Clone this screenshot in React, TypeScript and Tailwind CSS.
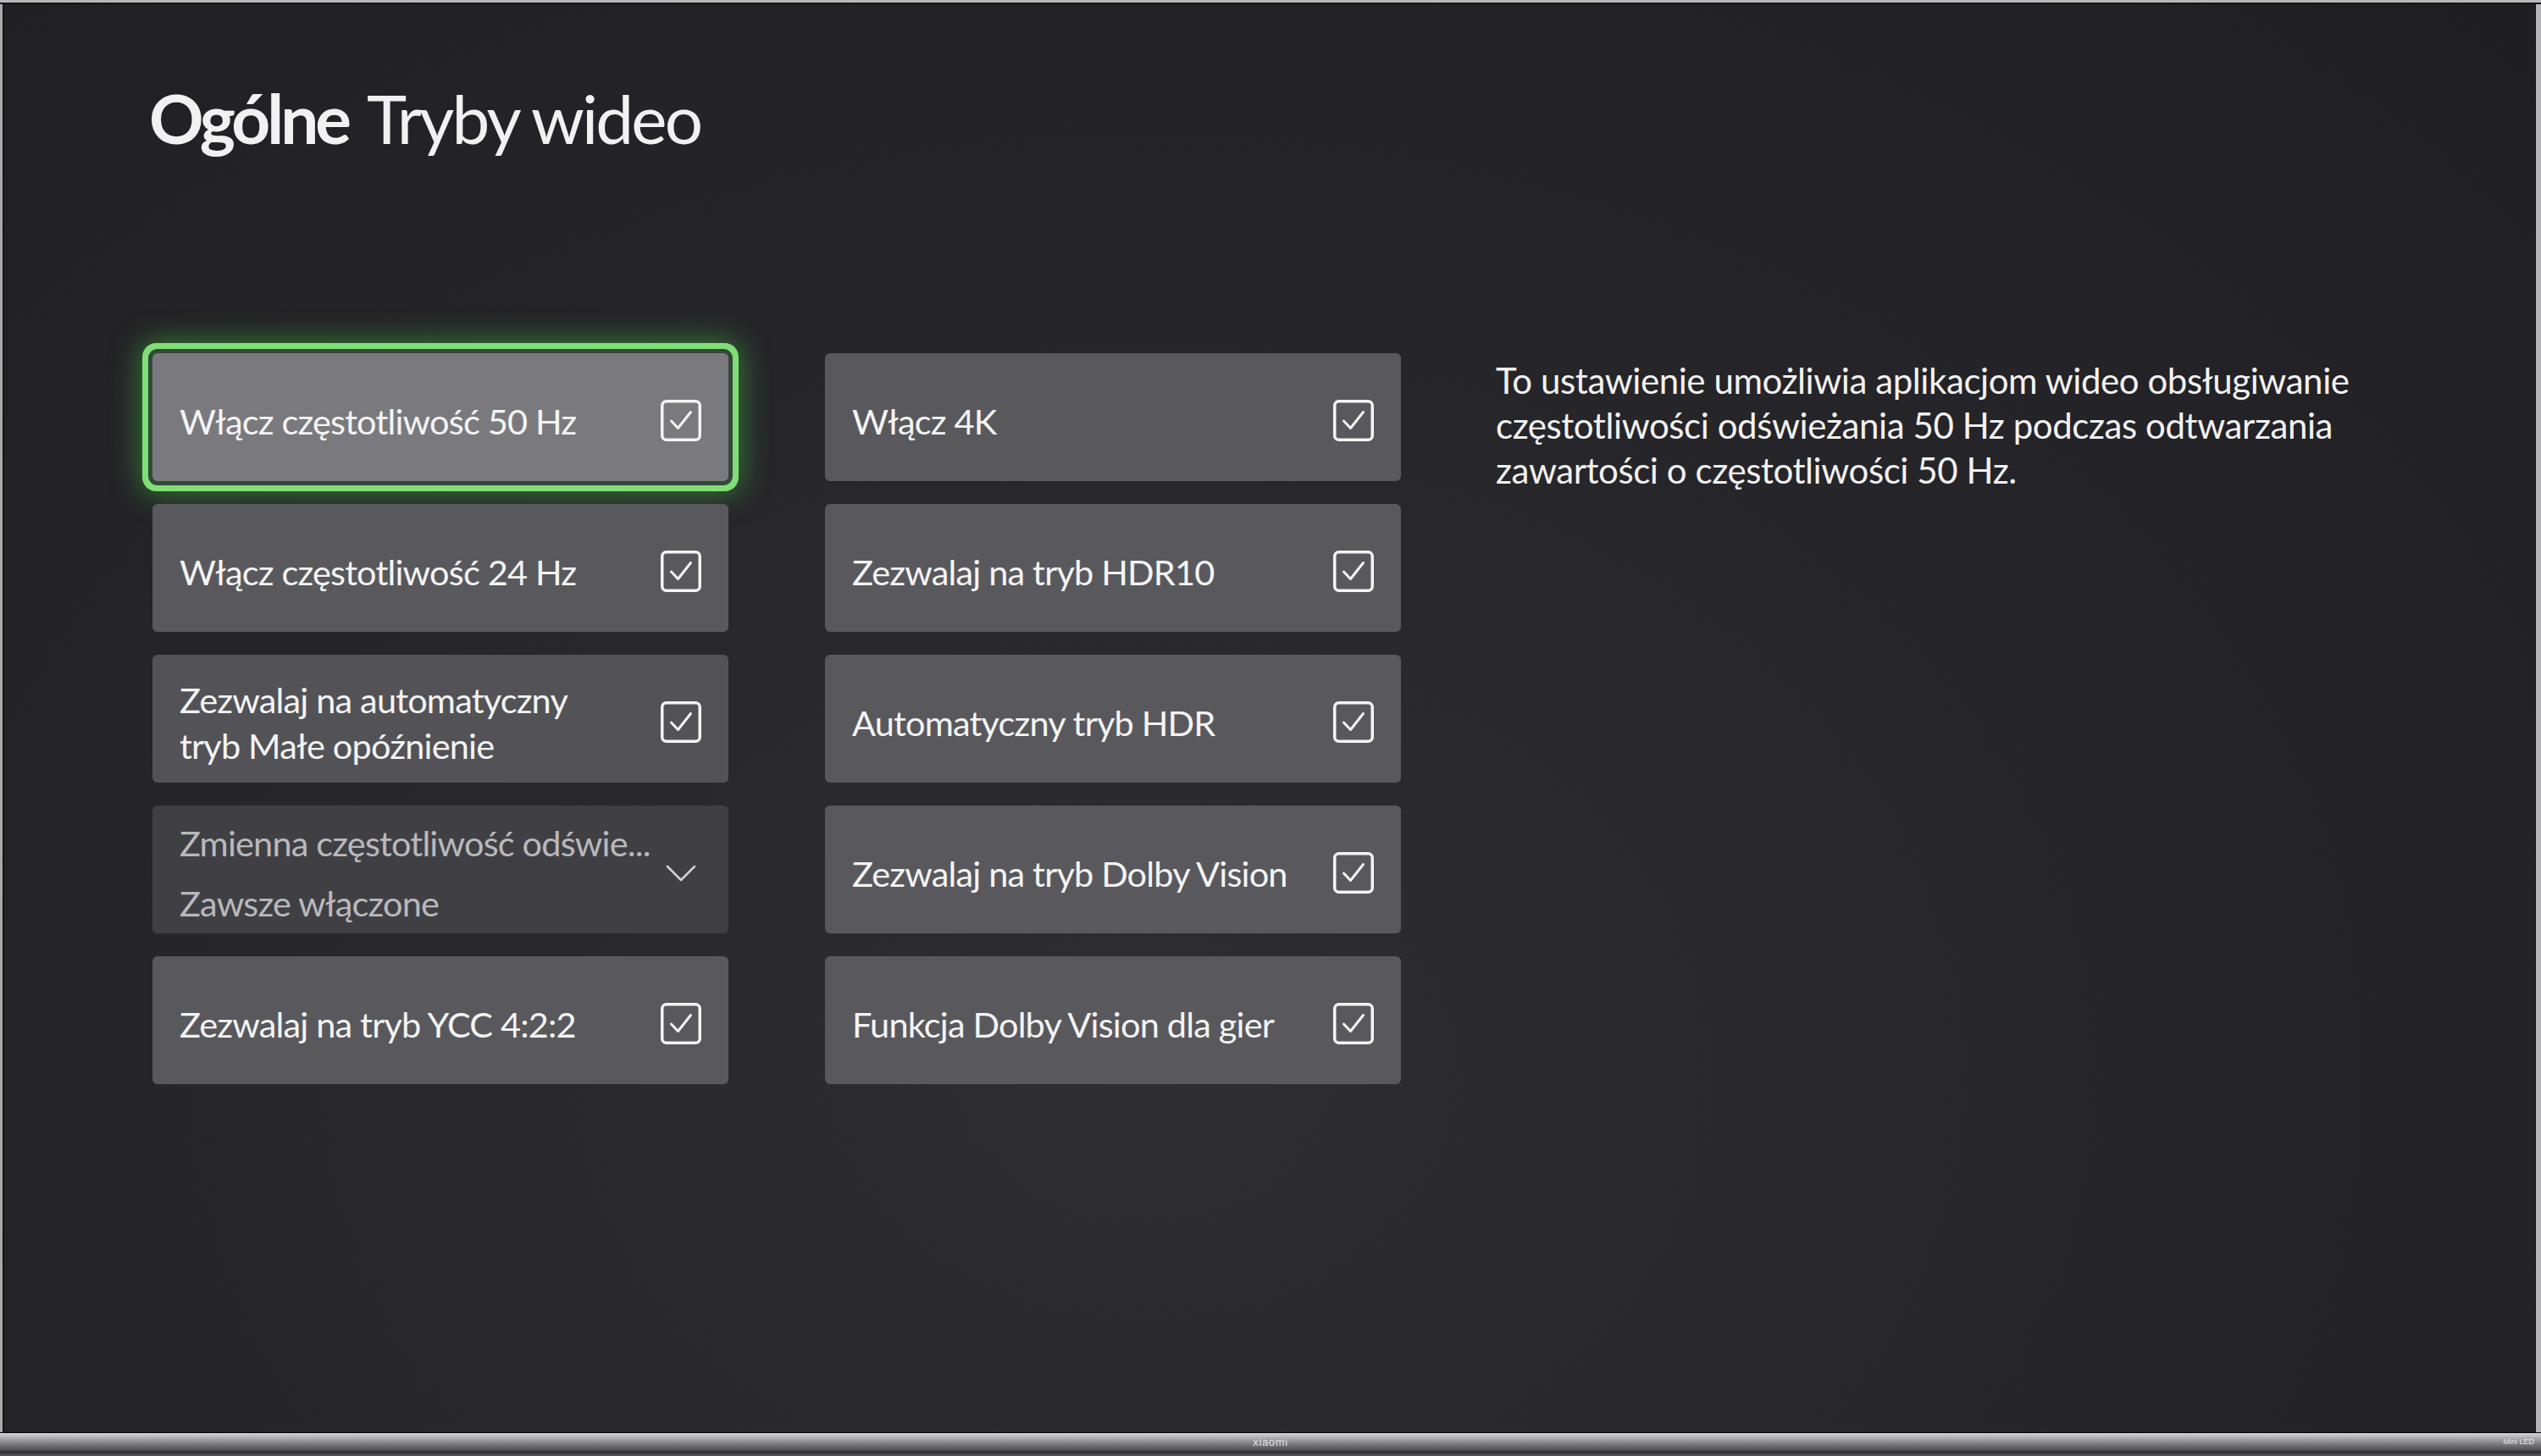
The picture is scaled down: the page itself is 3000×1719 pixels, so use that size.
import React from "react";

const sans = "font-['Lato','Noto_Sans',sans-serif]";

type Tile = {
    label?: string;
    lines?: string[];
    focused?: boolean;
    select?: { title: string; value: string };
    tone?: string;
};

const leftColumn: Tile[] = [
    { label: "Włącz częstotliwość 50 Hz", focused: true },
    { label: "Włącz częstotliwość 24 Hz" },
    { lines: ["Zezwalaj na automatyczny", "tryb Małe opóźnienie"], tone: "bg-[#535357]" },
    { select: { title: "Zmienna częstotliwość odświe...", value: "Zawsze włączone" } },
    { label: "Zezwalaj na tryb YCC 4:2:2" },
];

const rightColumn: Tile[] = [
    { label: "Włącz 4K" },
    { label: "Zezwalaj na tryb HDR10" },
    { label: "Automatyczny tryb HDR" },
    { label: "Zezwalaj na tryb Dolby Vision" },
    { label: "Funkcja Dolby Vision dla gier" },
];

const CheckBox = () => (
    <svg width="48" height="49" viewBox="0 0 48 49" fill="none" className="shrink-0">
        <rect x="1.75" y="1.75" width="44.5" height="45.5" rx="5" stroke="#f4f4f4" strokeWidth="3.5" />
        <polyline points="12.5,25 20.5,33.5 35.5,14.5" stroke="#f4f4f4" strokeWidth="3" strokeLinecap="round" strokeLinejoin="round" />
    </svg>
);

const Chevron = () => (
    <svg width="36" height="22" viewBox="0 0 36 22" fill="none" className="shrink-0 mr-[6px]">
        <polyline points="2,3 18,19 34,3" stroke="#d0d0d4" strokeWidth="2.6" strokeLinecap="round" strokeLinejoin="round" />
    </svg>
);

const SettingTile = ({ tile }: { tile: Tile }) => {
    // focused tile gets the green Xbox focus ring
    const base = tile.focused
        ? "bg-[#7a7a7e] shadow-[0_0_0_5px_#34483a,0_0_0_12px_#80de76,0_0_34px_14px_rgba(70,210,70,0.5)]"
        : tile.select
          ? "bg-[#404044]"
          : tile.tone ?? "bg-[#59595d]";

    return (
        <div className={`h-[151px] rounded-[6px] flex items-center justify-between pl-[32px] pr-[32px] pt-[8px] ${base}`}>
            {tile.select ? (
                <>
                    <div className="flex flex-col gap-[17px] text-[#b9b9bd] text-[41.5px] leading-[54px] tracking-[-0.02em] whitespace-nowrap">
                        <span>{tile.select.title}</span>
                        <span>{tile.select.value}</span>
                    </div>
                    <Chevron />
                </>
            ) : (
                <>
                    <div className="text-[#f4f4f4] text-[41.5px] leading-[54px] tracking-[-0.02em] whitespace-nowrap">
                        {tile.lines
                            ? tile.lines.map((l) => <div key={l}>{l}</div>)
                            : tile.label}
                    </div>
                    <CheckBox />
                </>
            )}
        </div>
    );
};

export default function App() {
    return (
        <div className={`w-[3000px] h-[1719px] flex flex-col bg-[#111] ${sans}`}>
            {/* top bezel */}
            <div className="h-[5px] shrink-0 bg-gradient-to-b from-[#b9b9bb] from-60% to-[#151515] to-60%" />

            <div className="flex-1 flex min-h-0">
                <div className="w-[5px] shrink-0 bg-gradient-to-r from-[#a9a9ab] from-60% to-[#151515] to-60%" />

                {/* screen */}
                <main className="flex-1 flex flex-col bg-[radial-gradient(ellipse_at_45%_75%,#2e2d31_0%,#27262a_45%,#1f1e22_100%)] pl-[171px] pt-[95px]">
                    <h1 className="h-[78px] text-[80px] leading-[78px] text-[#f1f1f1] whitespace-nowrap">
                        <span className="font-bold tracking-[-0.05em]">Ogólne</span>
                        <span className="ml-[22px] tracking-[-0.035em]">Tryby wideo</span>
                    </h1>

                    <div className="flex mt-[239px] ml-[4px]">
                        <div className="w-[680px] flex flex-col gap-[27px]">
                            {leftColumn.map((t, i) => (
                                <SettingTile key={i} tile={t} />
                            ))}
                        </div>
                        <div className="w-[680px] ml-[114px] flex flex-col gap-[27px]">
                            {rightColumn.map((t, i) => (
                                <SettingTile key={i} tile={t} />
                            ))}
                        </div>
                        <p className="ml-[112px] mt-[6px] text-[42px] leading-[53px] tracking-[-0.01em] text-[#f2f2f2] whitespace-nowrap">
                            To ustawienie umożliwia aplikacjom wideo obsługiwanie
                            <br />
                            częstotliwości odświeżania 50 Hz podczas odtwarzania
                            <br />
                            zawartości o częstotliwości 50 Hz.
                        </p>
                    </div>
                </main>

                <div className="w-[7px] shrink-0 bg-gradient-to-r from-[#151515] from-20% to-[#b4b4b6] to-20%" />
            </div>

            {/* bottom bezel */}
            <div className="h-[1px] shrink-0 bg-[#050505]" />
            <div className="h-[21px] shrink-0 relative flex items-center justify-center bg-gradient-to-b from-[#d6d6d8] via-[#8c8c8f] to-[#4a4a4d]">
                <span className="text-[13px] leading-none text-[#e0e0e0] tracking-[0.05em] font-['Liberation_Sans',sans-serif]">xiaomi</span>
                <span className="absolute right-[8px] text-[9px] leading-none text-[#e6e6e6] font-['Liberation_Sans',sans-serif]">Mini LED</span>
            </div>
            <div className="h-[6px] shrink-0 bg-gradient-to-b from-[#2a2a2c] to-[#555558]" />
        </div>
    );
}
